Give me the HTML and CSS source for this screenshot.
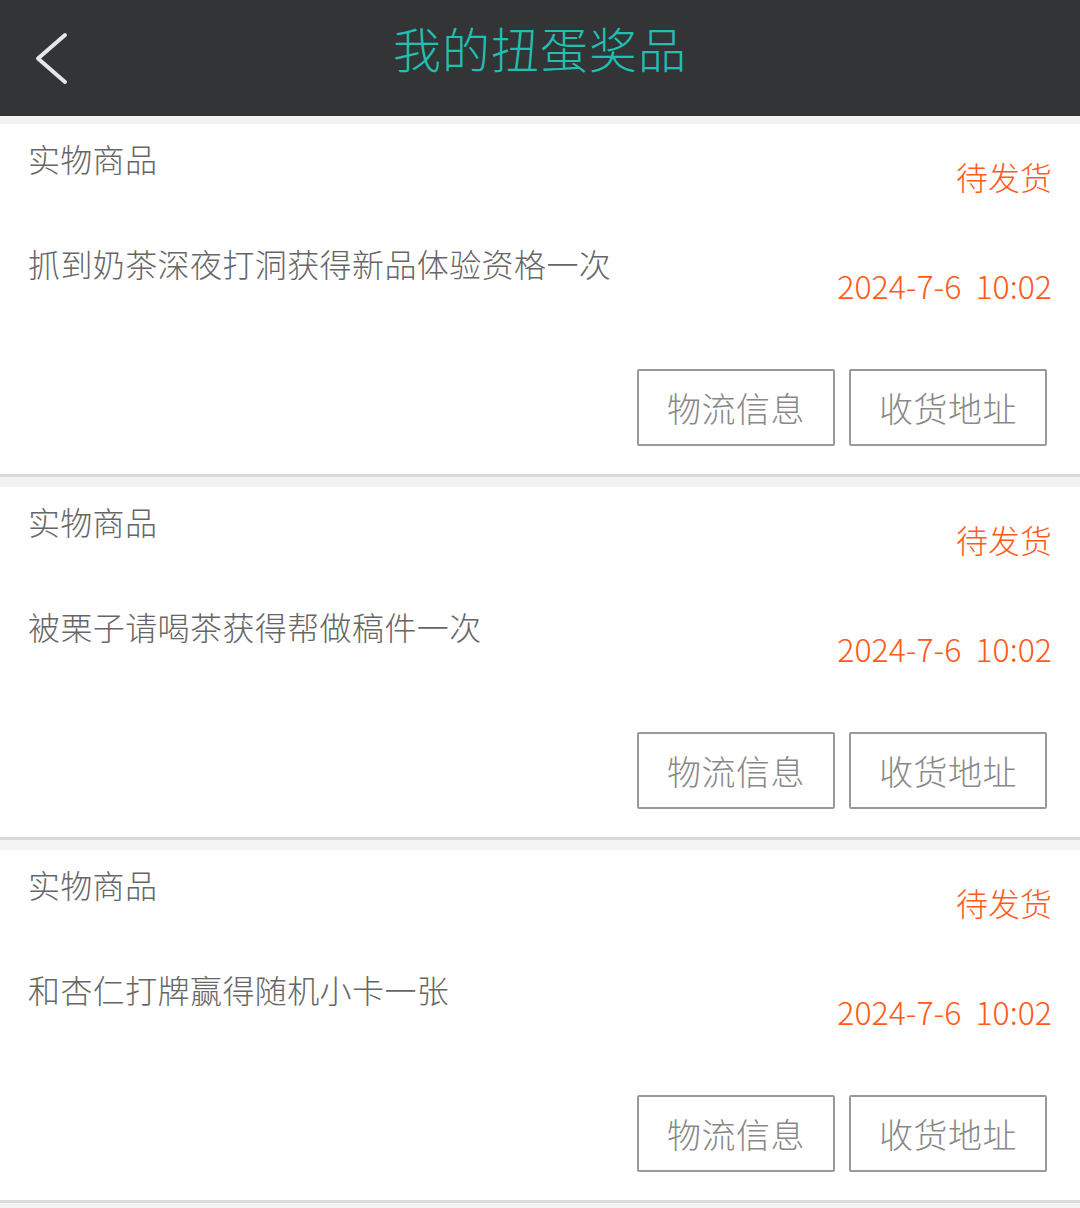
FILE: index.html
```html
<!DOCTYPE html>
<html lang="zh-CN">
<head>
<meta charset="utf-8">
<title>我的扭蛋奖品</title>
<link rel="stylesheet" href="styles.css">
</head>
<body>
<header class="topbar">
  <div class="back">
    <svg class="back-icon" width="40" height="60" viewBox="0 0 40 60"><path d="M35 7 L8 30.5 L35 54" fill="none" stroke="#e6e6e6" stroke-width="4" stroke-linecap="round" stroke-linejoin="round"/></svg>
  </div>
  <h1 class="title">我的扭蛋奖品</h1>
  <div class="spacer"></div>
</header>
<main class="list">
  <section class="card">
    <div class="row-top">
      <div class="kind">实物商品</div>
      <div class="status">待发货</div>
    </div>
    <div class="row-mid">
      <div class="name">抓到奶茶深夜打洞获得新品体验资格一次</div>
      <div class="date">2024-7-6  10:02</div>
    </div>
    <div class="actions">
      <button class="btn">物流信息</button>
      <button class="btn">收货地址</button>
    </div>
  </section>
  <section class="card">
    <div class="row-top">
      <div class="kind">实物商品</div>
      <div class="status">待发货</div>
    </div>
    <div class="row-mid">
      <div class="name">被栗子请喝茶获得帮做稿件一次</div>
      <div class="date">2024-7-6  10:02</div>
    </div>
    <div class="actions">
      <button class="btn">物流信息</button>
      <button class="btn">收货地址</button>
    </div>
  </section>
  <section class="card">
    <div class="row-top">
      <div class="kind">实物商品</div>
      <div class="status">待发货</div>
    </div>
    <div class="row-mid">
      <div class="name">和杏仁打牌赢得随机小卡一张</div>
      <div class="date">2024-7-6  10:02</div>
    </div>
    <div class="actions">
      <button class="btn">物流信息</button>
      <button class="btn">收货地址</button>
    </div>
  </section>
</main>
</body>
</html>
```
FILE: styles.css
```css
* { box-sizing: border-box; }
html, body {
  margin: 0;
  padding: 0;
  background: #f3f3f3;
  font-family: "Noto Sans CJK SC", "Noto Sans", sans-serif;
  font-weight: 300;
}
.topbar {
  height: 116px;
  background: #333436;
  display: grid;
  grid-template-columns: 1fr auto 1fr;
  align-items: start;
  padding-top: 23px;
}
.back { padding-left: 30px; padding-top: 5px; }
.back-icon { display: block; }
.title {
  margin: 0;
  font-size: 48px;
  line-height: 48px;
  font-weight: 300;
  letter-spacing: 1px;
  color: #1fbfb2;
}
.list { padding-top: 8px; }
.card {
  background: #fff;
  height: 353px;
  border-bottom: 3px solid #dadada;
  margin-bottom: 10px;
  padding: 18px 28px 0 28px;
}
.row-top {
  height: 105px;
  display: flex;
  justify-content: space-between;
  align-items: flex-start;
}
.kind {
  font-size: 32px;
  line-height: 32px;
  color: #666;
  letter-spacing: 0.3px;
}
.status {
  margin-top: 18px;
  font-size: 32px;
  line-height: 32px;
  color: #ff5a1a;
}
.row-mid {
  height: 122px;
  display: flex;
  justify-content: space-between;
  align-items: flex-start;
}
.name {
  font-size: 32px;
  line-height: 32px;
  color: #666;
  letter-spacing: 0.4px;
}
.date {
  margin-top: 22px;
  font-size: 32px;
  line-height: 32px;
  color: #ff5a1a;
  white-space: pre;
}
.actions {
  display: flex;
  justify-content: flex-end;
  gap: 14px;
  padding-right: 5px;
}
.btn {
  width: 198px;
  height: 77px;
  border: 2px solid #999;
  border-radius: 2px;
  background: #fff;
  color: #888;
  font-family: inherit;
  font-weight: 300;
  font-size: 34px;
  letter-spacing: 0.5px;
  padding: 0;
  display: flex;
  align-items: center;
  justify-content: center;
}
```
